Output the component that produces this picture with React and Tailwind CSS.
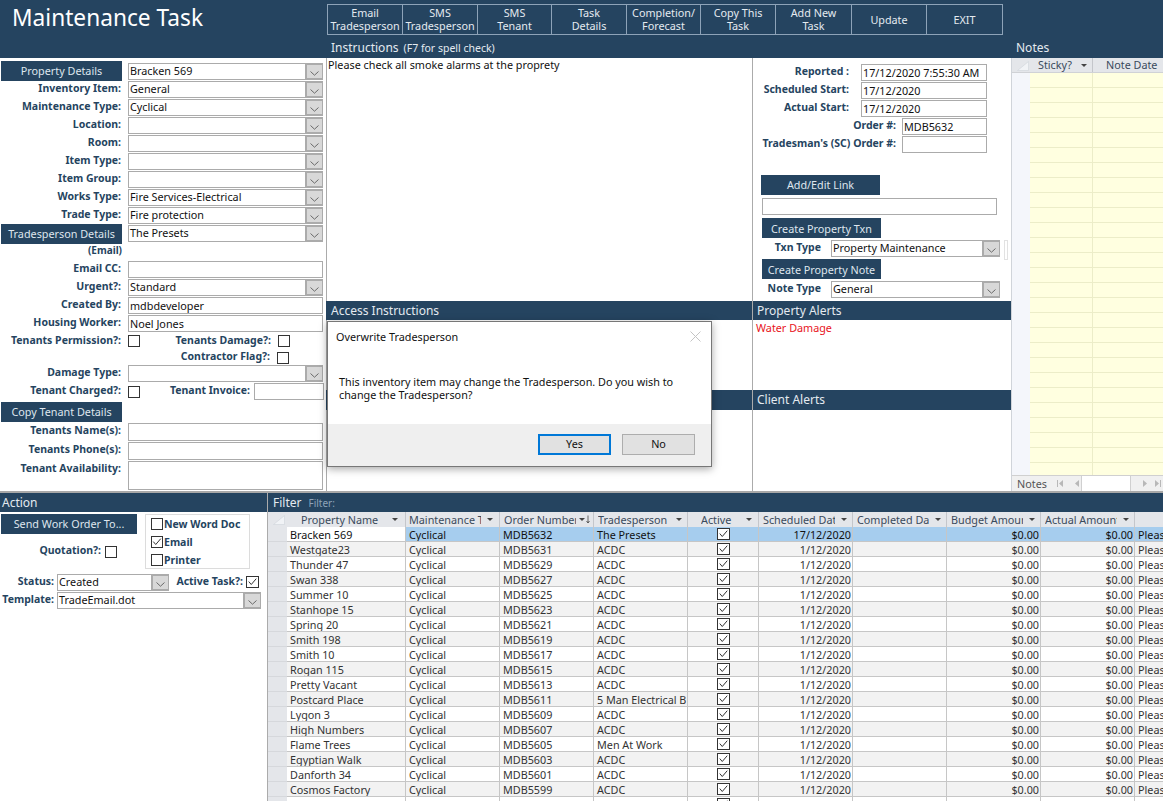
const navy = "bg-[#254460]";

function Chevron() {
  return (
    <svg width="9" height="5" viewBox="0 0 9 5" className="mt-[3px]">
      <path d="M0.5 0.5L4.5 4.2L8.5 0.5" fill="none" stroke="#6a6a6a" strokeWidth="1" />
    </svg>
  );
}

function Combo({ value, className = "w-[195px]" }) {
  return (
    <div className={`${className} h-[17px] border border-[#ababab] bg-white flex items-center shrink-0`}>
      <span className="flex-1 pl-[1px] text-[10.8px] text-[#111] truncate">{value}</span>
      <div className="w-[17px] h-[15px] bg-[#d8d8d8] border-l-[2px] border-y border-[#ababab] flex items-center justify-center">
        <Chevron />
      </div>
    </div>
  );
}

function Field({ value, className = "w-[195px] h-[17px]" }) {
  return (
    <div className={`${className} border border-[#ababab] bg-white pl-[1px] text-[10.8px] leading-[15px] text-[#111] shrink-0`}>
      {value}
    </div>
  );
}

function Label({ children, className = "w-[120px]" }) {
  return (
    <div className={`${className} text-right font-bold text-[10.5px] leading-[14px] text-[#254460] shrink-0 whitespace-nowrap`}>
      {children}
    </div>
  );
}

function Check({ checked, className = "" }) {
  return (
    <div className={`w-[12px] h-[12px] border border-[#333] bg-white shrink-0 ${className}`}>
      {checked && (
        <svg viewBox="0 0 12 12" className="w-full h-full">
          <path d="M1.5 5.5L4.5 9L10.5 2" fill="none" stroke="#333" strokeWidth="1.2" />
        </svg>
      )}
    </div>
  );
}

function NavyButton({ children, className = "w-[121px]" }) {
  return (
    <div className={`${className} h-[20px] ${navy} text-[#dfe6ee] text-[10.8px] flex items-center justify-center shrink-0 whitespace-nowrap`}>
      {children}
    </div>
  );
}

function Row({ label, children, className = "h-[18px]" }) {
  return (
    <div className={`flex gap-[7px] ${className}`}>
      <Label>{label}</Label>
      {children}
    </div>
  );
}

const toolbar = [
  ["Email", "Tradesperson", "w-[74px]"],
  ["SMS", "Tradesperson", "w-[75px]"],
  ["SMS", "Tenant", "w-[74px]"],
  ["Task", "Details", "w-[75px]"],
  ["Completion/", "Forecast", "w-[74px]"],
  ["Copy This", "Task", "w-[75px]"],
  ["Add New", "Task", "w-[76px]"],
  ["Update", null, "w-[75px]"],
  ["EXIT", null, "w-[76px]"],
];

function Toolbar() {
  return (
    <div className="flex w-fit h-[31px] border border-[#8ea3b8] text-[#e4eaf0] text-[10.8px] leading-[13px]">
      {toolbar.map(([a, b, w], i) => (
        <div key={i} className={`${w} flex flex-col items-center justify-center text-center whitespace-nowrap ${b ? "pb-[2px]" : ""} ${i > 0 ? "border-l border-[#8ea3b8]" : ""}`}>
          <span>{a}</span>
          {b && <span>{b}</span>}
        </div>
      ))}
    </div>
  );
}

function Header() {
  return (
    <div className={`${navy} h-[58px] flex shrink-0 text-white`}>
      <div className="w-[327px] pl-[12px] pt-[1px] text-[22.7px] leading-[34px] whitespace-nowrap shrink-0">Maintenance Task</div>
      <div className="w-[689px] shrink-0 pt-[4px]">
        <Toolbar />
        <div className="pl-[4px] pt-[5px] flex items-baseline gap-[5px] text-[#e4eaf0]">
          <span className="text-[12px] leading-[16px]">Instructions</span>
          <span className="text-[10.5px] leading-[16px]">(F7 for spell check)</span>
        </div>
      </div>
      <div className="flex-1 pt-[40px] text-[12px] leading-[16px] text-[#e4eaf0]">Notes</div>
    </div>
  );
}

function LeftPanel() {
  return (
    <div className="w-[327px] shrink-0 border-r border-[#ababab] pl-[1px] pt-[3px] bg-white">
      <div className="flex gap-[6px] h-[20px]">
        <NavyButton>Property Details</NavyButton>
        <div className="pt-[2px]"><Combo value="Bracken 569" /></div>
      </div>
      <Row label="Inventory Item:"><Combo value="General" /></Row>
      <Row label="Maintenance Type:"><Combo value="Cyclical" /></Row>
      <Row label="Location:"><Combo value="" /></Row>
      <Row label="Room:"><Combo value="" /></Row>
      <Row label="Item Type:"><Combo value="" /></Row>
      <Row label="Item Group:"><Combo value="" /></Row>
      <Row label="Works Type:"><Combo value="Fire Services-Electrical" /></Row>
      <Row label="Trade Type:"><Combo value="Fire protection" /></Row>
      <div className="flex gap-[6px] h-[20px] -mt-[1px]">
        <NavyButton>Tradesperson Details</NavyButton>
        <div className="pt-[1px]"><Combo value="The Presets" /></div>
      </div>
      <div className="h-[17px] w-[121px] text-right font-bold text-[10px] leading-[13px] text-[#254460]">(Email)</div>
      <Row label="Email CC:"><Field value="" /></Row>
      <Row label="Urgent?:"><Combo value="Standard" /></Row>
      <Row label="Created By:"><Field value="mdbdeveloper" /></Row>
      <Row label="Housing Worker:"><Field value="Noel Jones" /></Row>
      <Row label="Tenants Permission?:" className="h-[16px]">
        <Check className="mt-[2px]" />
        <div className="flex flex-1 justify-end pr-[36px] gap-[7px]">
          <Label className="w-auto">Tenants Damage?:</Label>
          <Check className="mt-[2px]" />
        </div>
      </Row>
      <div className="flex justify-end w-[288px] gap-[7px] h-[16px]">
        <Label className="w-auto">Contractor Flag?:</Label>
        <Check className="mt-[3px]" />
      </div>
      <Row label="Damage Type:"><Combo value="" /></Row>
      <Row label="Tenant Charged?:">
        <Check className="mt-[3px]" />
        <div className="flex flex-1 justify-end gap-[4px] pr-[2px]">
          <Label className="w-auto">Tenant Invoice:</Label>
          <Field value="" className="w-[70px] h-[17px]" />
        </div>
      </Row>
      <NavyButton className="w-[121px] mt-[1px]">Copy Tenant Details</NavyButton>
      <Row label="Tenants Name(s):" className="h-[20px] pt-[1px]"><Field value="" className="w-[195px] h-[18px]" /></Row>
      <Row label="Tenants Phone(s):" className="h-[19px]"><Field value="" className="w-[195px] h-[18px]" /></Row>
      <Row label="Tenant Availability:" className="h-[29px]"><Field value="" className="w-[195px] h-[29px]" /></Row>
    </div>
  );
}

function SectionBar({ children, className = "" }) {
  return (
    <div className={`${navy} h-[19px] text-[12px] leading-[19px] text-[#e4eaf0] shrink-0 ${className}`}>
      {children}
    </div>
  );
}

function MiddlePanel() {
  return (
    <div className="w-[427px] -ml-[1px] shrink-0 border-r border-[#ababab] flex flex-col">
      <div className="h-[243px] pl-[2px] text-[10.8px] leading-[13px] text-[#111]">Please check all smoke alarms at the proprety</div>
      <SectionBar className="pl-[5px]">Access Instructions</SectionBar>
      <div className="h-[70px]" />
      <SectionBar className="h-[20px]" />
    </div>
  );
}

function DetailRow({ label, value, fieldWidth = "w-[126px]", gap = "gap-[12px]" }) {
  return (
    <div className={`flex h-[18px] justify-end pr-[24px] ${gap}`}>
      <Label className="w-auto">{label}</Label>
      <Field value={value} className={`${fieldWidth} h-[17px]`} />
    </div>
  );
}

function RightPanel() {
  return (
    <div className="w-[258px] shrink-0 flex flex-col bg-white">
      <div className="h-[243px] pt-[6px]">
        <DetailRow label="Reported :" value="17/12/2020 7:55:30 AM" />
        <DetailRow label="Scheduled Start:" value="17/12/2020" />
        <DetailRow label="Actual Start:" value="17/12/2020" />
        <DetailRow label="Order #:" value="MDB5632" fieldWidth="w-[85px]" gap="gap-[6px]" />
        <DetailRow label="Tradesman's (SC) Order #:" value="" fieldWidth="w-[85px]" gap="gap-[6px]" />
        <NavyButton className="w-[119px] ml-[8px] mt-[21px]">Add/Edit Link</NavyButton>
        <Field value="" className="w-[235px] h-[17px] ml-[9px] mt-[3px]" />
        <NavyButton className="w-[119px] ml-[9px] mt-[3px] pt-[2px]">Create Property Txn</NavyButton>
        <div className="flex h-[19px] pt-[2px] pl-[9px] gap-[10px]">
          <Label className="w-[59px]">Txn Type</Label>
          <Combo value="Property Maintenance" className="w-[169px]" />
          <div className="w-[4px] h-[20px] border border-[#e2e2e2] -ml-[6px]" />
        </div>
        <NavyButton className="w-[119px] ml-[9px] mt-[2px] pt-[2px]">Create Property Note</NavyButton>
        <div className="flex h-[19px] pt-[2px] pl-[9px] gap-[10px]">
          <Label className="w-[59px]">Note Type</Label>
          <Combo value="General" className="w-[169px]" />
        </div>
      </div>
      <SectionBar className="pl-[4px]">Property Alerts</SectionBar>
      <div className="h-[70px] pl-[3px] text-[10.8px] leading-[15px] text-[#e8141c]">Water Damage</div>
      <SectionBar className="h-[20px] leading-[20px] pl-[4px]">Client Alerts</SectionBar>
    </div>
  );
}

function SortArrow() {
  return <span className="inline-block w-0 h-0 border-x-[3px] border-x-transparent border-t-[3px] border-t-[#444] shrink-0" />;
}

function SelectorCorner() {
  return (
    <svg width="12" height="10" viewBox="0 0 12 10" className="absolute left-[5px] top-[3px]">
      <path d="M0.5 9.5L11.5 0.5V9.5Z" fill="#f1f3f6" stroke="#d3d7dd" strokeWidth="0.7" />
    </svg>
  );
}

function NavIcon({ d }) {
  return (
    <svg width="9" height="9" viewBox="0 0 9 9" className="shrink-0">
      <path d={d} fill="#b8b8b8" />
    </svg>
  );
}

function NotesPanel() {
  return (
    <div className="flex-1 min-w-0 border-l border-[#d0d4da] flex flex-col bg-[#f4f6fb]">
      <div className="h-[15px] grid grid-cols-[18px_63px_1fr] bg-[#e4e6ea] border-b border-[#d0d2d6] relative shrink-0 text-[10.8px] leading-[14px] text-[#3a4a5c]">
        <SelectorCorner />
        <div />
        <div className="flex items-center justify-between pl-[8px] pr-[5px] border-r border-[#c4c6cb]"><span>Sticky?</span><SortArrow /></div>
        <div className="pl-[13px] whitespace-nowrap">Note Date</div>
      </div>
      <div className="flex-1 flex flex-col overflow-hidden pl-[18px]">
        {Array.from({ length: 27 }).map((_, i) => (
          <div key={i} className="h-[15px] shrink-0 grid grid-cols-[63px_1fr] bg-[#ffffe0] border-b border-[#ecedc8]">
            <div className="border-r border-[#ecedc8]" />
            <div />
          </div>
        ))}
      </div>
      <div className="h-[16px] shrink-0 bg-[#f0f0f0] border-t border-[#d0d0d0] flex items-center text-[10.8px] text-[#555] pl-[5px]">
        <span className="w-[40px] pt-[2px]">Notes</span>
        <div className="w-[16px]"><NavIcon d="M1 1H2V8H1ZM7 1V8L3 4.5Z" /></div>
        <div className="w-[9px]"><NavIcon d="M7 1V8L3 4.5Z" /></div>
        <div className="w-[50px] h-[15px] bg-white border-x border-[#d0d0d0] shrink-0" />
        <div className="w-[19px] pl-[10px]"><NavIcon d="M2 1V8L6 4.5Z" /></div>
        <div className="pl-[4px]"><NavIcon d="M1 1V8L5 4.5ZM6 1H7V8H6Z" /></div>
      </div>
    </div>
  );
}

function ActionPanel() {
  return (
    <div className="w-[268px] shrink-0 border-r border-[#ababab] flex flex-col bg-white">
      <div className={`${navy} h-[19px] pl-[2px] text-[12px] leading-[20px] text-[#e4eaf0] shrink-0`}>Action</div>
      <div className="flex pt-[2px] pl-[1px] h-[62px]">
        <div className="w-[144px] shrink-0">
          <NavyButton className="w-[136px]">Send Work Order To...</NavyButton>
          <div className="flex justify-end gap-[4px] pr-[28px] mt-[9px]">
            <Label className="w-auto">Quotation?:</Label>
            <Check className="mt-[3px]" />
          </div>
        </div>
        <div className="w-[105px] h-[55px] border border-[#dcdcdc] pl-[5px] pt-[2px] flex flex-col gap-[5px] shrink-0">
          {[["New Word Doc", false], ["Email", true], ["Printer", false]].map(([t, c]) => (
            <div key={t} className="flex h-[13px] items-center gap-[1px]">
              <Check checked={c} />
              <Label className="w-auto pt-[1px]">{t}</Label>
            </div>
          ))}
        </div>
      </div>
      <div className="flex h-[18px] items-start">
        <Label className="w-[54px]">Status:</Label>
        <Combo value="Created" className="w-[112px] ml-[3px]" />
        <Label className="w-[74px]">Active Task?:</Label>
        <Check checked className="ml-[3px] mt-[2px] w-[13px]" />
      </div>
      <div className="flex h-[18px]">
        <Label className="w-[54px]">Template:</Label>
        <Combo value="TradeEmail.dot" className="w-[204px] ml-[3px]" />
      </div>
    </div>
  );
}

const gridRows = [
  ["Bracken 569", "Cyclical", "MDB5632", "The Presets", "17/12/2020"],
  ["Westgate23", "Cyclical", "MDB5631", "ACDC", "1/12/2020"],
  ["Thunder 47", "Cyclical", "MDB5629", "ACDC", "1/12/2020"],
  ["Swan 338", "Cyclical", "MDB5627", "ACDC", "1/12/2020"],
  ["Summer 10", "Cyclical", "MDB5625", "ACDC", "1/12/2020"],
  ["Stanhope 15", "Cyclical", "MDB5623", "ACDC", "1/12/2020"],
  ["Spring 20", "Cyclical", "MDB5621", "ACDC", "1/12/2020"],
  ["Smith 198", "Cyclical", "MDB5619", "ACDC", "1/12/2020"],
  ["Smith 10", "Cyclical", "MDB5617", "ACDC", "1/12/2020"],
  ["Rogan 115", "Cyclical", "MDB5615", "ACDC", "1/12/2020"],
  ["Pretty Vacant", "Cyclical", "MDB5613", "ACDC", "1/12/2020"],
  ["Postcard Place", "Cyclical", "MDB5611", "5 Man Electrical B", "1/12/2020"],
  ["Lygon 3", "Cyclical", "MDB5609", "ACDC", "1/12/2020"],
  ["High Numbers", "Cyclical", "MDB5607", "ACDC", "1/12/2020"],
  ["Flame Trees", "Cyclical", "MDB5605", "Men At Work", "1/12/2020"],
  ["Egyptian Walk", "Cyclical", "MDB5603", "ACDC", "1/12/2020"],
  ["Danforth 34", "Cyclical", "MDB5601", "ACDC", "1/12/2020"],
  ["Cosmos Factory", "Cyclical", "MDB5599", "ACDC", "1/12/2020"],
];

const gridCols = "grid grid-cols-[19px_119px_94px_94px_94px_71px_94px_94px_94px_94px_29px]";
const headers = ["Property Name", "Maintenance Type", "Order Number", "Tradesperson", "Active", "Scheduled Date", "Completed Date", "Budget Amount", "Actual Amount"];

function GridHeader() {
  return (
    <div className={`${gridCols} h-[15px] bg-[#e4e6ea] relative text-[10.8px] leading-[15px] text-[#3a4a5c] shrink-0`}>
      <SelectorCorner />
      <div />
      {headers.map((h, i) => (
        <div key={h} className={`flex items-center border-r border-[#c4c6cb] overflow-hidden whitespace-nowrap ${i === 0 ? "pl-[14px]" : i === 4 ? "pl-[13px]" : i === 1 ? "pl-[3px]" : "pl-[4px]"}`}>
          <span className={`overflow-hidden shrink-0 ${i === 0 ? "w-[85px]" : i === 4 ? "w-[39px]" : "w-[72px]"}`}>{h}</span>
          <span className={`flex shrink-0 ${i === 2 ? "pl-[3px]" : "pl-[6px]"}`}><SortArrow /></span>
          {i === 2 && (
            <svg width="4" height="9" viewBox="0 0 4 9" className="shrink-0 ml-[1px]">
              <path d="M2 0.5V8M0.5 6L2 8L3.5 6" fill="none" stroke="#444" strokeWidth="0.8" />
            </svg>
          )}
        </div>
      ))}
      <div />
    </div>
  );
}

function GridRow({ row, index }) {
  const selected = index === 0;
  const bg = selected ? "bg-[#a6cdee]" : index % 2 === 1 ? "bg-[#f2f2f2]" : "bg-white";
  const cell = "border-r border-b border-[#c6c6c6] px-[3px] overflow-hidden whitespace-nowrap";
  return (
    <div className={`${gridCols} h-[15px] shrink-0 text-[10.8px] leading-[16px] ${selected ? "text-[#111]" : "text-[#333]"} ${bg}`}>
      <div className="bg-[#e4e6ea] border-b border-[#d6d8dc]" />
      <div className={`${cell} ${selected ? "bg-white" : ""}`}>{row[0]}</div>
      <div className={cell}>{row[1]}</div>
      <div className={cell}>{row[2]}</div>
      <div className={cell}>{row[3]}</div>
      <div className={`${cell} flex justify-center`}><Check checked className="w-[13px] mt-[1px]" /></div>
      <div className={`${cell} text-right pr-[1px]`}>{row[4]}</div>
      <div className={cell} />
      <div className={`${cell} text-right pr-[1px]`}>$0.00</div>
      <div className={`${cell} text-right pr-[1px]`}>$0.00</div>
      <div className="border-b border-[#c6c6c6] pl-[3px] overflow-hidden whitespace-nowrap">Please</div>
    </div>
  );
}

function FilterPanel() {
  return (
    <div className="flex-1 min-w-0 flex flex-col overflow-hidden">
      <div className={`${navy} h-[19px] pl-[5px] flex items-baseline gap-[7px] shrink-0`}>
        <span className="text-[12px] leading-[20px] text-[#e4eaf0]">Filter</span>
        <span className="text-[10px] leading-[20px] text-[#8ea3b8]">Filter:</span>
      </div>
      <GridHeader />
      {gridRows.map((row, i) => (
        <GridRow key={row[2]} row={row} index={i} />
      ))}
      <GridRow row={["", "", "", "", ""]} index={18} />
    </div>
  );
}

function Dialog() {
  return (
    <div className="absolute left-[327px] top-[321px] w-[385px] h-[146px] bg-white border border-[#777] shadow-[0_2px_8px_rgba(0,0,0,0.35)] flex flex-col text-[10.8px] text-[#111]">
      <div className="h-[102px] relative shrink-0">
        <div className="pl-[8px] pt-[7px] leading-[16px]">Overwrite Tradesperson</div>
        <svg width="11" height="11" viewBox="0 0 11 11" className="absolute right-[10px] top-[9px]">
          <path d="M0.5 0.5L10.5 10.5M10.5 0.5L0.5 10.5" stroke="#c4c4c4" strokeWidth="1" />
        </svg>
        <div className="pl-[11px] pr-[20px] pt-[30px] leading-[13px]">
          This inventory item may change the Tradesperson. Do you wish to change the Tradesperson?
        </div>
      </div>
      <div className="flex-1 bg-[#efefef] flex justify-end items-start pt-[10px] pr-[16px] gap-[11px]">
        <div className="w-[73px] h-[21px] bg-[#e1e1e1] border-[2px] border-[#0078d7] flex items-center justify-center">Yes</div>
        <div className="w-[73px] h-[21px] bg-[#e1e1e1] border border-[#adadad] flex items-center justify-center">No</div>
      </div>
    </div>
  );
}

export default function App() {
  return (
    <div className="w-[1163px] h-[801px] overflow-hidden relative flex flex-col bg-white font-['Noto_Sans','Open_Sans',sans-serif]">
      <Header />
      <div className="flex h-[433px] shrink-0">
        <LeftPanel />
        <MiddlePanel />
        <RightPanel />
        <NotesPanel />
      </div>
      <div className="h-[2px] bg-[#a8a8a8] shrink-0" />
      <div className="flex flex-1 min-h-0">
        <ActionPanel />
        <FilterPanel />
      </div>
      <Dialog />
    </div>
  );
}
